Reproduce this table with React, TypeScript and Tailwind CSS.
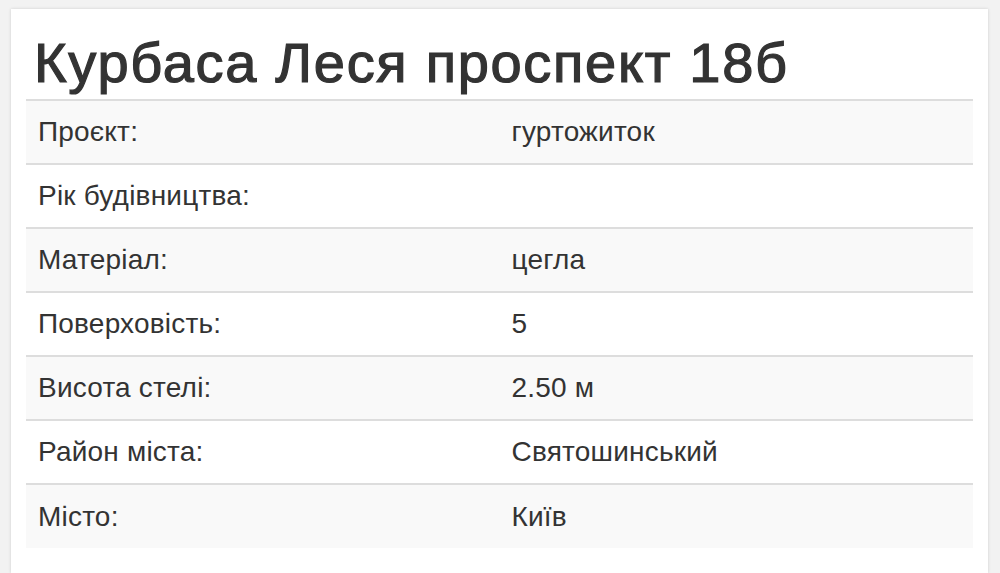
const rows = [
  { label: 'Проєкт:', value: 'гуртожиток' },
  { label: 'Рік будівництва:', value: '' },
  { label: 'Матеріал:', value: 'цегла' },
  { label: 'Поверховість:', value: '5' },
  { label: 'Висота стелі:', value: '2.50 м' },
  { label: 'Район міста:', value: 'Святошинський' },
  { label: 'Місто:', value: 'Київ' },
];

export default function App() {
  return (
    <div className="min-h-[573px] bg-[#f2f2f2] pl-[11px] pr-[12px] pt-[9px] font-['Liberation_Sans',Arial,sans-serif] text-[#333]">
      <div className="h-[564px] bg-white px-[15px] shadow-[0_0_3px_rgba(0,0,0,0.15)]">
        <h1 className="pl-[8px] pt-[23px] pb-[5px] text-[56px] leading-[62px] tracking-[1.7px] text-[#333] [-webkit-text-stroke:1.2px_#333]">
          Курбаса Леся проспект 18б
        </h1>
        <table className="w-full border-collapse text-[28px] tracking-[0.2px]">
          <tbody>
            {rows.map((row, i) => (
              <tr key={row.label} className={i % 2 === 0 ? 'bg-[#f9f9f9]' : 'bg-white'}>
                <td className="h-[64px] w-1/2 border-t-2 border-[#ddd] px-[12px] align-middle">{row.label}</td>
                <td className="h-[64px] w-1/2 border-t-2 border-[#ddd] px-[12px] align-middle">{row.value}</td>
              </tr>
            ))}
          </tbody>
        </table>
      </div>
    </div>
  );
}
